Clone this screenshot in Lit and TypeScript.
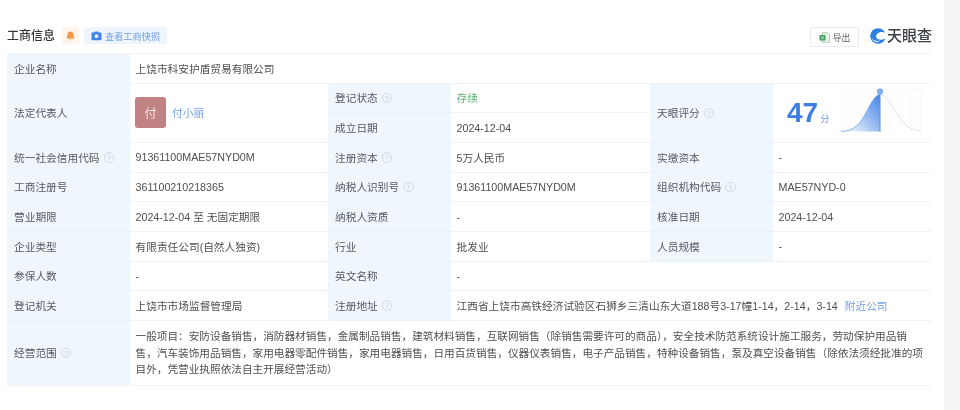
import { LitElement, html, css } from "lit";
import { customElement } from "lit/decorators.js";

const help = html`<span class="help">?</span>`;

const COMMA = "\uFF0C";
const COLON = "\uFF1A";
const LP = "\uFF08";
const RP = "\uFF09";

const address = ["江西省上饶市高铁经济试验区石狮乡三清山东大道188号3-17幢1-14", "2-14", "3-14"].join(COMMA);

const scope =
  "一般项目" +
  COLON +
  [
    "安防设备销售",
    "消防器材销售",
    "金属制品销售",
    "建筑材料销售",
    `互联网销售${LP}除销售需要许可的商品${RP}`,
    "安全技术防范系统设计施工服务",
    "劳动保护用品销售",
    "汽车装饰用品销售",
    "家用电器零配件销售",
    "家用电器销售",
    "日用百货销售",
    "仪器仪表销售",
    "电子产品销售",
    "特种设备销售",
    `泵及真空设备销售${LP}除依法须经批准的项目外`,
    `凭营业执照依法自主开展经营活动${RP}`,
  ].join(COMMA);

@customElement("app-root")
export class AppRoot extends LitElement {
  static styles = css`
    :host {
      display: flex;
      width: 960px;
      height: 410px;
      background: #f5f5f6;
      font-family: "Liberation Sans", "Noto Sans CJK SC", sans-serif;
      font-size: 10.7px;
      color: #4d4f53;
      overflow: hidden;
    }
    .main {
      width: 944px;
      height: 410px;
      box-sizing: border-box;
      background: #fff;
      padding: 0 12px 0 7px;
      filter: blur(0.5px);
    }
    .head {
      height: 54px;
      box-sizing: border-box;
      padding-top: 27px;
      display: flex;
      align-items: flex-start;
    }
    .title {
      font-size: 12px;
      font-weight: 500;
      color: #33363b;
      line-height: 18px;
      width: 55px;
    }
    .bell {
      width: 17px;
      height: 17px;
      background: #fff5ea;
      border-radius: 2px;
      display: flex;
      align-items: center;
      justify-content: center;
    }
    .snap {
      margin-left: 5px;
      width: 83px;
      height: 17px;
      box-sizing: border-box;
      padding-left: 7px;
      background: #eff5fd;
      border-radius: 2px;
      display: flex;
      align-items: center;
      gap: 3px;
      font-size: 9.2px;
      color: #6f9ee8;
    }
    .spacer {
      flex: 1;
    }
    .export {
      width: 49px;
      height: 20px;
      box-sizing: border-box;
      border: 1px solid #e9ebee;
      border-radius: 2px;
      display: flex;
      align-items: center;
      justify-content: center;
      gap: 3px;
      font-size: 8.8px;
      color: #5c5f64;
    }
    .logo {
      margin-left: 11px;
      height: 16px;
      margin-top: 1px;
      display: flex;
      align-items: center;
      gap: 1px;
      font-size: 15px;
      font-weight: 500;
      line-height: 16px;
      color: #3c4148;
    }
    .table {
      display: grid;
      grid-template-columns: 123px 198px 123px 199px 123px 159px;
      grid-template-rows: repeat(9, 29.67px) 64px;
      border-top: 1px solid #f1f3f6;
      border-bottom: 1px solid #f1f3f6;
      margin-top: -1px;
    }
    .l,
    .v {
      display: flex;
      align-items: center;
      border-bottom: 1px solid #f1f3f6;
      box-sizing: border-box;
      min-width: 0;
    }
    .v {
      padding-left: 5.5px;
    }
    .l {
      padding-left: 7px;
      background: #eff6fc;
      color: #575a5f;
      gap: 4px;
      border-bottom-color: #e9f1f8;
    }
    .last {
      border-bottom: 0;
    }
    .wide {
      grid-column: 2 / 7;
    }
    .wide4 {
      grid-column: 4 / 7;
    }
    .tall {
      grid-row: span 2;
    }
    .help {
      width: 10.5px;
      height: 10.5px;
      box-sizing: border-box;
      border: 1px solid #cfdbe6;
      border-radius: 50%;
      font-size: 7.5px;
      line-height: 9px;
      text-align: center;
      color: #c3d0dc;
      flex: none;
    }
    .avatar {
      width: 31px;
      height: 31px;
      border-radius: 3px;
      background: #c08283;
      color: #f5e6e6;
      font-size: 12px;
      display: flex;
      align-items: center;
      justify-content: center;
      margin-left: -0.5px;
      margin-right: 6px;
    }
    .link {
      color: #6f9fea;
    }
    .ok {
      color: #5cb273;
    }
    .addr-link {
      margin-left: 7px;
    }
    .score {
      padding-left: 14px;
    }
    .num {
      font-size: 28px;
      font-weight: 700;
      color: #3d7de6;
      line-height: 30px;
    }
    .fen {
      font-size: 9.2px;
      color: #6f9fea;
      margin-left: 2px;
      margin-top: 10px;
    }
    .chart {
      margin-left: 11px;
      flex: none;
    }
    .scope {
      font-size: 10.65px;
      line-height: 16.6px;
      padding-right: 4px;
    }
  `;

  render() {
    return html`<div class="main">
      <div class="head">
        <div class="title">工商信息</div>
        <div class="bell">
          <svg width="9" height="10" viewBox="0 0 9 10">
            <path d="M4.5 .6c-2 0-3 1.4-3 3.2 0 1.6-.5 2.6-1 3.2v.5h8V7c-.5-.6-1-1.6-1-3.2 0-1.8-1-3.2-3-3.2z" fill="#f0954a" />
            <path d="M3.2 8.4h2.6c-.2.6-.7.9-1.3.9s-1.1-.3-1.3-.9z" fill="#f0954a" />
          </svg>
        </div>
        <div class="snap">
          <svg width="11" height="10" viewBox="0 0 11 10">
            <path d="M1.2 1.6h2l.8-1.1h3l.8 1.1h2c.4 0 .7.3.7.7v6.3c0 .4-.3.7-.7.7H1.2c-.4 0-.7-.3-.7-.7V2.300c0-.4.3-.7.7-.7z" fill="#3f83e6" />
            <circle cx="5.500" cy="5.200" r="1.900" fill="#eff5fd" />
          </svg>
          <span>查看工商快照</span>
        </div>
        <div class="spacer"></div>
        <div class="export">
          <svg width="11" height="11" viewBox="0 0 11 11">
            <path d="M3 .7h5.500l2 2v7.600H3z" fill="#e9f3ea" stroke="#8cc09a" stroke-width=".7" />
            <rect x=".5" y="3" width="6" height="5.500" rx=".6" fill="#3f9a5e" />
            <path d="M2.300 4.300l2.400 3M4.700 4.300l-2.400 3" stroke="#fff" stroke-width=".7" />
          </svg>
          <span>导出</span>
        </div>
        <div class="logo">
          <svg width="16" height="16" viewBox="0 0 16 16">
            <circle cx="8" cy="8" r="7.800" fill="#2f7fe0" />
            <path d="M16.500 5C13 3.400 9.500 3.500 7.400 5.500 5.300 7.500 5.800 10.400 8.200 11.300c2.600 1 6 .1 8.300-1.800z" fill="#fff" />
            <path d="M1.600 9.800c2 3 5.400 3.700 8.700 2.800-1.600 1.500-3.600 1.900-5.200 1.400-1.600-.6-3-2.300-3.500-4.200z" fill="#fff" opacity=".8" />
          </svg>
          <span>天眼查</span>
        </div>
      </div>

      <div class="table">
        <div class="l">企业名称</div>
        <div class="v wide">上饶市科安护盾贸易有限公司</div>

        <div class="l tall">法定代表人</div>
        <div class="v tall"><div class="avatar">付</div><span class="link">付小丽</span></div>
        <div class="l">登记状态 ${help}</div>
        <div class="v ok">存续</div>
        <div class="l tall">天眼评分 ${help}</div>
        <div class="v tall score">
          <span class="num">47</span><span class="fen">分</span>
          ${this.chart()}
        </div>
        <div class="l">成立日期</div>
        <div class="v">2024-12-04</div>

        <div class="l">统一社会信用代码 ${help}</div>
        <div class="v">91361100MAE57NYD0M</div>
        <div class="l">注册资本 ${help}</div>
        <div class="v">5万人民币</div>
        <div class="l">实缴资本</div>
        <div class="v">-</div>

        <div class="l">工商注册号</div>
        <div class="v">361100210218365</div>
        <div class="l">纳税人识别号 ${help}</div>
        <div class="v">91361100MAE57NYD0M</div>
        <div class="l">组织机构代码 ${help}</div>
        <div class="v">MAE57NYD-0</div>

        <div class="l">营业期限</div>
        <div class="v">2024-12-04 至 无固定期限</div>
        <div class="l">纳税人资质</div>
        <div class="v">-</div>
        <div class="l">核准日期</div>
        <div class="v">2024-12-04</div>

        <div class="l">企业类型</div>
        <div class="v">有限责任公司(自然人独资)</div>
        <div class="l">行业</div>
        <div class="v">批发业</div>
        <div class="l">人员规模</div>
        <div class="v">-</div>

        <div class="l">参保人数</div>
        <div class="v">-</div>
        <div class="l">英文名称</div>
        <div class="v wide4">-</div>

        <div class="l">登记机关</div>
        <div class="v">上饶市市场监督管理局</div>
        <div class="l">注册地址 ${help}</div>
        <div class="v wide4"><span>${address}</span><span class="link addr-link">附近公司</span></div>

        <div class="l last">经营范围 ${help}</div>
        <div class="v wide last scope"><span>${scope}</span></div>
      </div>
    </div>`;
  }

  chart() {
    const labels = ["0", "1", "3", "15", "50", "85", "97", "99", "100"];
    const px = 40;
    const base = 45.5;
    const h = 37;
    const y = (x: number) => {
      const s = x < px ? 12 : 14;
      return (base - h * Math.exp(-((x - px) ** 2) / (2 * s * s))).toFixed(2);
    };
    let left = "";
    for (let x = 1; x <= px; x++) left += `${x === 1 ? "M" : "L"}${x} ${y(x)}`;
    let right = "";
    for (let x = px; x <= 81; x++) right += `${x === px ? "M" : "L"}${x} ${y(x)}`;
    return html`<svg class="chart" width="84" height="54" viewBox="0 0 84 54">
      <defs>
        <linearGradient id="g" x1="1" y1="0" x2="0" y2="0.8">
          <stop offset="0" stop-color="#3f83e6" />
          <stop offset="1" stop-color="#3f83e6" stop-opacity=".04" />
        </linearGradient>
      </defs>
      <g stroke="#f0f3f6" stroke-width=".5" fill="none">
        <path d="M1 3h80M1 12h80M1 21h80M1 30h80M1 39h80" />
        <path d="M1 3v43M11 3v43M21 3v43M31 3v43M51 3v43M61 3v43M71 3v43M81 3v43" />
      </g>
      <path d=${left + `L${px} ${base}L1 ${base}Z`} fill="url(#g)" />
      <path d=${right} fill="none" stroke="#d3d8df" stroke-width=".8" />
      <path d=${left} fill="none" stroke="#6a9fea" stroke-width=".8" />
      <path d="M40 7v39" stroke="#5a92e6" stroke-width="1" />
      <circle cx="40" cy="5.500" r="2.800" fill="#7fb0ee" stroke="#5a92e6" stroke-width=".5" />
      ${labels.map(
        (t, i) => html`<text x=${2 + i * 9.9} y="51" font-size="3.600" text-anchor="middle" fill="#7f9cc0">${t}</text>`
      )}
    </svg>`;
  }
}
